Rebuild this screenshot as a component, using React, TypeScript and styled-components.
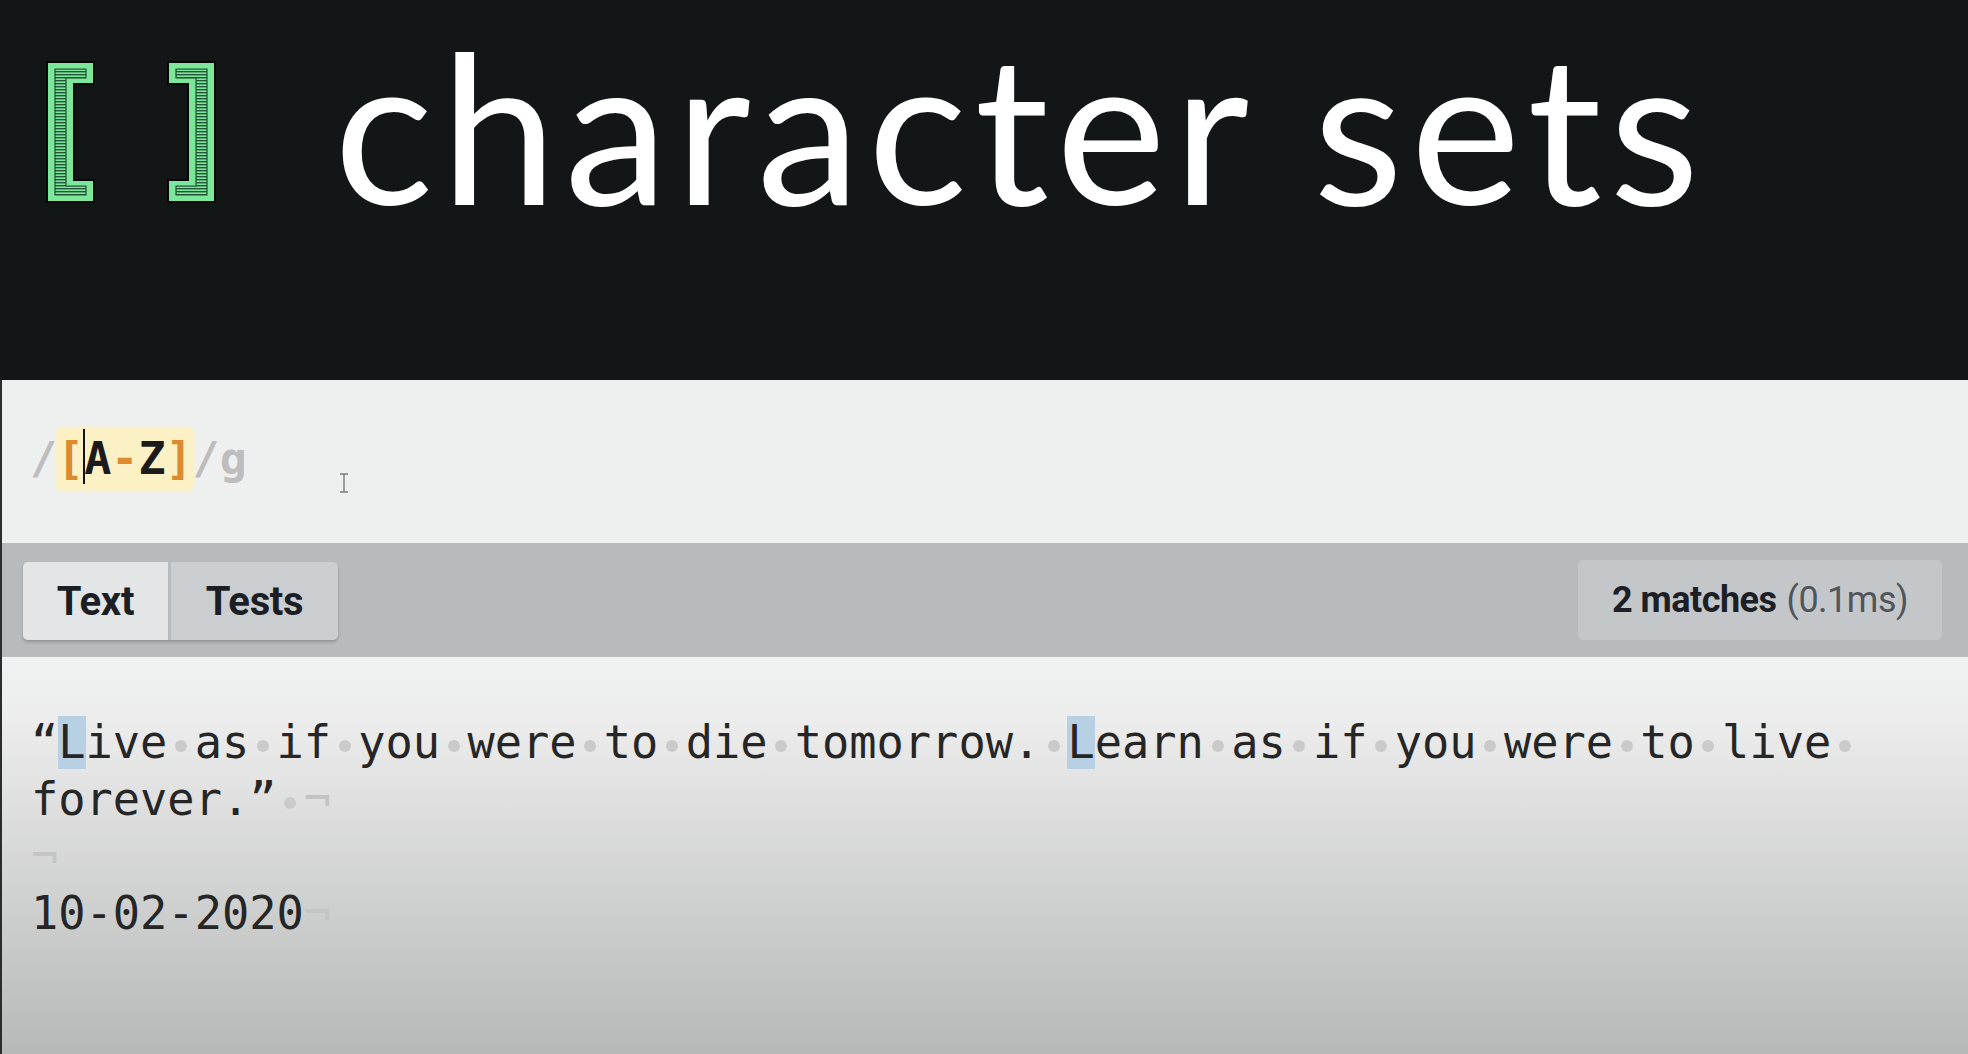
import React from "react";
import styled, { createGlobalStyle } from "styled-components";

const GlobalStyle = createGlobalStyle`
  html, body { margin: 0; padding: 0; background: #121617; }
  body { width: 1968px; height: 1054px; overflow: hidden; }
  #root { width: 1968px; height: 1054px; }
`;

const Page = styled.div`
  width: 1968px;
  height: 1054px;
  display: flex;
  flex-direction: column;
  overflow: hidden;
`;

const Header = styled.header`
  height: 380px;
  flex: none;
  background: #121617;
  display: flex;
  align-items: flex-start;
  padding-left: 46px;
  box-sizing: border-box;
`;

const Logo = styled.svg`
  flex: none;
  margin-top: 60px;
  display: block;
`;

const Title = styled.h1`
  margin: 0 0 0 118px;
  font-family: Lato, "Open Sans", sans-serif;
  font-weight: 400;
  font-size: 208px;
  line-height: 1.2;
  letter-spacing: 7.5px;
  color: #ffffff;
  white-space: nowrap;
`;

const ExprBar = styled.div`
  height: 163px;
  flex: none;
  background: #eef0ef;
  border-left: 2px solid #2a2d2e;
  box-sizing: border-box;
  display: flex;
  align-items: flex-start;
  padding: 48px 0 0 28px;
`;

const Expr = styled.div`
  font-family: "DejaVu Sans Mono", "Liberation Mono", monospace;
  font-weight: 700;
  font-size: 45px;
  line-height: 62px;
  white-space: pre;
  color: #1b1b1b;
`;

const Delim = styled.span`
  color: #bdbdbd;
`;

const Group = styled.span`
  display: inline-block;
  background: #fbf1c4;
  border-radius: 5px;
  box-shadow: 0 0 3px 1px #fbf1c4;
`;

const Meta = styled.span`
  color: #de8a2e;
`;

const CaretChar = styled.span`
  position: relative;
  &::before {
    content: "";
    position: absolute;
    left: -1px;
    top: -3px;
    width: 2px;
    height: 55px;
    background: #111;
  }
`;

const IBeam = styled.svg`
  flex: none;
  margin: 45px 0 0 92px;
  display: block;
`;

const Toolbar = styled.div`
  height: 114px;
  flex: none;
  background: #b8bbbd;
  border-left: 2px solid #2a2d2e;
  box-sizing: border-box;
  display: flex;
  justify-content: space-between;
  align-items: flex-start;
  padding: 17px 26px 0 21px;
`;

const Tabs = styled.div`
  display: flex;
  gap: 3px;
  margin-top: 2px;
  border-radius: 5px;
  box-shadow: 0 2px 3px rgba(0, 0, 0, 0.22);
`;

const Tab = styled.div<{ $w: number; $active?: boolean; $pos: "first" | "last" }>`
  width: ${(p) => p.$w}px;
  height: 78px;
  display: flex;
  align-items: center;
  justify-content: center;
  background: ${(p) => (p.$active ? "#e4e5e7" : "#cbced1")};
  border-radius: ${(p) => (p.$pos === "first" ? "5px 0 0 5px" : "0 5px 5px 0")};
  font-family: Roboto, "Liberation Sans", sans-serif;
  font-weight: 700;
  font-size: 40px;
  letter-spacing: -0.3px;
  color: #1b1f25;
`;

const Pill = styled.div`
  width: 364px;
  height: 80px;
  background: #c4c7c9;
  border-radius: 6px;
  display: flex;
  align-items: center;
  justify-content: center;
  gap: 10px;
  font-family: Roboto, "Liberation Sans", sans-serif;
  font-size: 36px;
  letter-spacing: -0.5px;
`;

const Count = styled.span`
  font-weight: 700;
  color: #1c2026;
`;

const Time = styled.span`
  font-weight: 400;
  color: #50555a;
`;

const Editor = styled.div`
  flex: 1;
  border-left: 2px solid #2a2d2e;
  background: linear-gradient(#f0f1f1 0%, #ecedec 15%, #b7b9b8 100%);
  padding: 57px 0 0 29px;
  font-family: "DejaVu Sans Mono", "Liberation Mono", monospace;
  font-size: 45.3px;
  line-height: 57px;
  color: #262626;
  white-space: pre;
`;

const Line = styled.div`
  height: 57px;
`;

const Match = styled.span`
  background: #b8d0e3;
`;

const Sp = styled.span`
  position: relative;
  &::after {
    content: "";
    position: absolute;
    left: 50%;
    top: calc(100% - 29px);
    width: 12px;
    height: 12px;
    margin-left: -6px;
    border-radius: 50%;
    background: #cacaca;
  }
`;

const Eol = styled.span`
  color: #c4c4c4;
`;

const words = (s: string) => {
  const parts = s.split(" ");
  const out: React.ReactNode[] = [];
  parts.forEach((w, i) => {
    if (i > 0) out.push(<Sp key={"s" + i}> </Sp>);
    if (w) out.push(<React.Fragment key={"w" + i}>{w}</React.Fragment>);
  });
  return out;
};

const Bracket = ({ flip, x }: { flip?: boolean; x: number }) => {
  const outer = "M0 0 H47 V22 H27 V118 H47 V140 H0 Z";
  const inner = "M8 7 H39 V16 H19 V124 H39 V133 H8 Z";
  const t = flip ? `translate(${x + 47} 2) scale(-1 1)` : `translate(${x} 2)`;
  return (
    <g transform={t}>
      <path d={outer} fill="#7ce79b" stroke="#050807" strokeWidth="2" />
      <path d={inner} fill="url(#hatch)" stroke="#1f4f2d" strokeWidth="1.2" />
    </g>
  );
};

export default function App() {
  return (
    <>
      <GlobalStyle />
      <Page>
        <Header>
          <Logo width="170" height="146" viewBox="0 0 170 146">
            <defs>
              <pattern id="hatch" width="4" height="3" patternUnits="userSpaceOnUse">
                <rect width="4" height="3" fill="#7ce79b" />
                <rect width="4" height="1.4" fill="#24573a" />
              </pattern>
            </defs>
            <Bracket x={1} />
            <Bracket x={122} flip />
          </Logo>
          <Title>character sets</Title>
        </Header>

        <ExprBar>
          <Expr>
            <Delim>/</Delim>
            <Group>
              <Meta>[</Meta>
              <CaretChar>A</CaretChar>
              <Meta>-</Meta>Z<Meta>]</Meta>
            </Group>
            <Delim>/g</Delim>
          </Expr>
          <IBeam width="10" height="20" viewBox="0 0 10 20">
            <path d="M1 1 H9 M5 1 V19 M1 19 H9" stroke="#7a7a7a" strokeWidth="1.4" fill="none" />
          </IBeam>
        </ExprBar>

        <Toolbar>
          <Tabs>
            <Tab $w={145} $active $pos="first">Text</Tab>
            <Tab $w={167} $pos="last">Tests</Tab>
          </Tabs>
          <Pill>
            <Count>2 matches</Count>
            <Time>(0.1ms)</Time>
          </Pill>
        </Toolbar>

        <Editor>
          <Line>
            “<Match>L</Match>
            {words("ive as if you were to die tomorrow. ")}
            <Match>L</Match>
            {words("earn as if you were to live ")}
          </Line>
          <Line>
            {words("forever.” ")}
            <Eol>¬</Eol>
          </Line>
          <Line>
            <Eol>¬</Eol>
          </Line>
          <Line>
            10-02-2020<Eol>¬</Eol>
          </Line>
        </Editor>
      </Page>
    </>
  );
}
